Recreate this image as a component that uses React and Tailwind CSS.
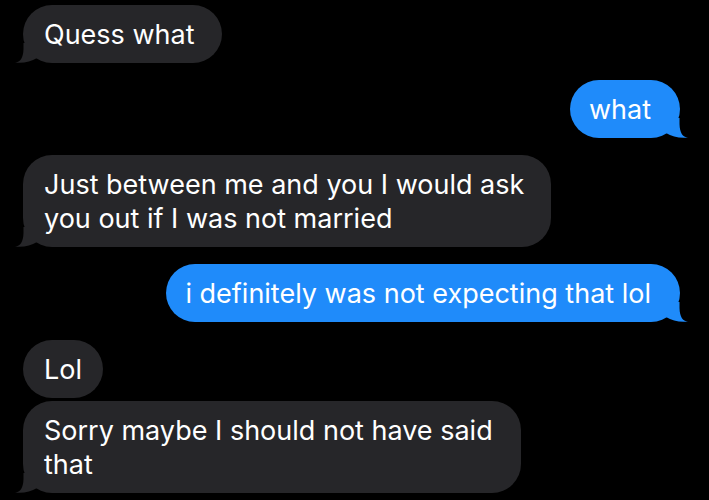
const messages = [
  { id: 1, from: "them", lines: ["Quess what"], tail: true, gap: "", pr: "pr-[27px]" },
  { id: 2, from: "me", lines: ["what"], tail: true, gap: "mt-[17px]", pr: "pr-[29px]" },
  { id: 3, from: "them", lines: ["Just between me and you I would ask", "you out if I was not married"], tail: true, gap: "mt-[17px]", pr: "pr-[27px]" },
  { id: 4, from: "me", lines: ["i definitely was not expecting that lol"], tail: true, gap: "mt-[17px]", pr: "pr-[29px]" },
  { id: 5, from: "them", lines: ["Lol"], tail: false, gap: "mt-[18px]", pr: "pr-[21px]" },
  { id: 6, from: "them", lines: ["Sorry maybe I should not have said", "that"], tail: true, gap: "mt-[3px]", pr: "pr-[28px]" },
];

function Tail({ mine }) {
  return (
    <svg
      className={mine ? "absolute -right-[8px] bottom-0 w-[22px] h-[20px] -scale-x-100" : "absolute -left-[8px] bottom-0 w-[22px] h-[20px]"}
      viewBox="0 0 22 20"
      aria-hidden="true"
    >
      <path d="M0 19.6C5.5 19 8.2 15 8.5 6L8.5 0L22 0L22 15C16 18.6 9 20.4 0 19.6Z" fill={mine ? "#1f8bfa" : "#262629"} />
    </svg>
  );
}

function Bubble({ msg }) {
  const mine = msg.from === "me";
  return (
    <div className={(mine ? "flex justify-end pr-[29px] " : "flex justify-start pl-[23px] ") + msg.gap}>
      <div
        className={
          "relative rounded-[29px] pt-[13px] pb-[11px] text-[27px] leading-[34px] text-white " +
          (mine ? "bg-[#1f8bfa] pl-[19px] " : "bg-[#262629] pl-[21px] ") +
          msg.pr
        }
      >
        {msg.tail && <Tail mine={mine} />}
        <div className="relative whitespace-nowrap">
          {msg.lines.map((line, i) => (
            <div key={i}>{line}</div>
          ))}
        </div>
      </div>
    </div>
  );
}

export default function App() {
  return (
    <div className="w-[709px] h-[500px] bg-black overflow-hidden pt-[5px] font-['Inter','Liberation_Sans',sans-serif]">
      <div className="flex flex-col">
        {messages.map((m) => (
          <Bubble key={m.id} msg={m} />
        ))}
      </div>
    </div>
  );
}
